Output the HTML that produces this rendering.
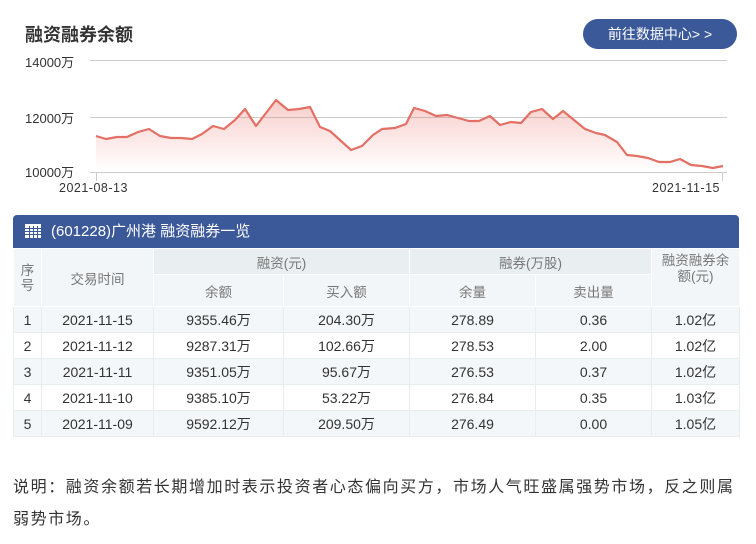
<!DOCTYPE html>
<html><head><meta charset="utf-8"><style>
*{margin:0;padding:0;box-sizing:border-box}
body{width:756px;height:544px;background:#fff;font-family:"Liberation Sans","Noto Sans CJK SC",sans-serif;color:#333;position:relative;overflow:hidden}
.a{position:absolute}
.title{left:25px;top:21px;font-size:18px;font-weight:bold;color:#333}
.btn{left:583px;top:19px;width:154px;height:30px;border-radius:15px;background:#3b5998;color:#fff;font-size:14px;line-height:30px;text-align:center}
.yl{font-size:13px;color:#333;left:25px}
table{border-collapse:collapse;position:absolute;left:13px;top:248px;width:726px;font-size:14px;table-layout:fixed}
td{text-align:center;height:26px;border:1px solid #e8edf0;color:#333}
.h td{color:#777;font-size:13.5px;background:#f3f6f8;border-color:#fff}
.h .g{background:#e9eef1}
tr.o td{background:#f4f7f9}
</style></head><body>
<div class="a title">融资融券余额</div>
<div class="a btn">前往数据中心&gt; &gt;</div>
<div class="a yl" style="top:52px">14000万</div>
<div class="a yl" style="top:108px">12000万</div>
<div class="a yl" style="top:162px">10000万</div>
<div class="a" style="left:59px;top:181px;font-size:12.5px;letter-spacing:.5px">2021-08-13</div>
<div class="a" style="left:652px;top:181px;font-size:12.5px;letter-spacing:.5px">2021-11-15</div>
<svg class="a" style="left:0;top:0" width="756" height="200">
<defs><linearGradient id="g" x1="0" y1="0" x2="0" y2="1"><stop offset="0" stop-color="#e9736a" stop-opacity=".35"/><stop offset="1" stop-color="#e9736a" stop-opacity="0"/></linearGradient></defs>
<g stroke="#ccc" stroke-width="1"><line x1="90" y1="60.5" x2="727" y2="60.5"/><line x1="90" y1="117.5" x2="727" y2="117.5"/><line x1="90" y1="172.5" x2="727" y2="172.5"/><line x1="96.5" y1="172" x2="96.5" y2="181"/><line x1="722.5" y1="172" x2="722.5" y2="181"/></g>
<path fill="url(#g)" d="M96,136 106,139 117,137 127,137 138,132 149,129 160,136 171,138 181,138 192,139 202,134 213,126 224,129 235,120 245,109 256,126 266,113 276,100 288,110 299,109 310,107 320,127 330,131 341,141 351,150 362,146 373,135 382,129 395,128 406,124 414,108 425,111 436,116 447,115 458,118 469,121 479,121 490,116 500,125 511,122 521,123 531,112 542,109 553,119 563,111 574,120 585,129 596,133 605,135 617,142 627,155 637,156 648,158 659,162 670,162 680,159 691,165 702,166 713,168 723,166 L723,172 96,172Z"/>
<polyline fill="none" stroke="#e46f64" stroke-width="2.2" stroke-linejoin="round" points="96,136 106,139 117,137 127,137 138,132 149,129 160,136 171,138 181,138 192,139 202,134 213,126 224,129 235,120 245,109 256,126 266,113 276,100 288,110 299,109 310,107 320,127 330,131 341,141 351,150 362,146 373,135 382,129 395,128 406,124 414,108 425,111 436,116 447,115 458,118 469,121 479,121 490,116 500,125 511,122 521,123 531,112 542,109 553,119 563,111 574,120 585,129 596,133 605,135 617,142 627,155 637,156 648,158 659,162 670,162 680,159 691,165 702,166 713,168 723,166"/>
</svg>
<div class="a" style="left:13px;top:215px;width:726px;height:33px;background:#3b5998;border-radius:4px 4px 0 0;color:#fff;font-size:15px;line-height:33px;padding-left:38px">(601228)广州港 融资融券一览</div>
<svg class="a" style="left:25px;top:224px" width="16" height="14"><rect width="16" height="14" fill="#fff"/><g stroke="#3b5998" stroke-width="1"><line x1="0" y1="4.5" x2="16" y2="4.5"/><line x1="0" y1="7.5" x2="16" y2="7.5"/><line x1="0" y1="10.5" x2="16" y2="10.5"/><line x1="4.5" y1="2" x2="4.5" y2="14"/><line x1="8.5" y1="2" x2="8.5" y2="14"/><line x1="12.5" y1="2" x2="12.5" y2="14"/></g></svg>
<table>
<colgroup><col style="width:28px"><col style="width:112px"><col style="width:130px"><col style="width:126px"><col style="width:126px"><col style="width:116px"><col style="width:88px"></colgroup>
<tr class="h"><td rowspan="2" style="line-height:15px">序<br>号</td><td rowspan="2">交易时间</td><td colspan="2" class="g">融资(元)</td><td colspan="2" class="g">融券(万股)</td><td rowspan="2" style="line-height:16px;vertical-align:top;padding-top:4px">融资融券余<br>额(元)</td></tr>
<tr class="h" style="height:32px"><td style="height:32px">余额</td><td>买入额</td><td>余量</td><td>卖出量</td></tr>
<tr class="o"><td>1</td><td>2021-11-15</td><td>9355.46万</td><td>204.30万</td><td>278.89</td><td>0.36</td><td>1.02亿</td></tr>
<tr><td>2</td><td>2021-11-12</td><td>9287.31万</td><td>102.66万</td><td>278.53</td><td>2.00</td><td>1.02亿</td></tr>
<tr class="o"><td>3</td><td>2021-11-11</td><td>9351.05万</td><td>95.67万</td><td>276.53</td><td>0.37</td><td>1.02亿</td></tr>
<tr><td>4</td><td>2021-11-10</td><td>9385.10万</td><td>53.22万</td><td>276.84</td><td>0.35</td><td>1.03亿</td></tr>
<tr class="o"><td>5</td><td>2021-11-09</td><td>9592.12万</td><td>209.50万</td><td>276.49</td><td>0.00</td><td>1.05亿</td></tr>
</table>
<div class="a" style="left:13px;top:472px;width:750px;font-size:16px;line-height:32px;color:#333;letter-spacing:1.6px;white-space:nowrap">说明：融资余额若长期增加时表示投资者心态偏向买方，市场人气旺盛属强势市场，反之则属<br>弱势市场。</div>
</body></html>
